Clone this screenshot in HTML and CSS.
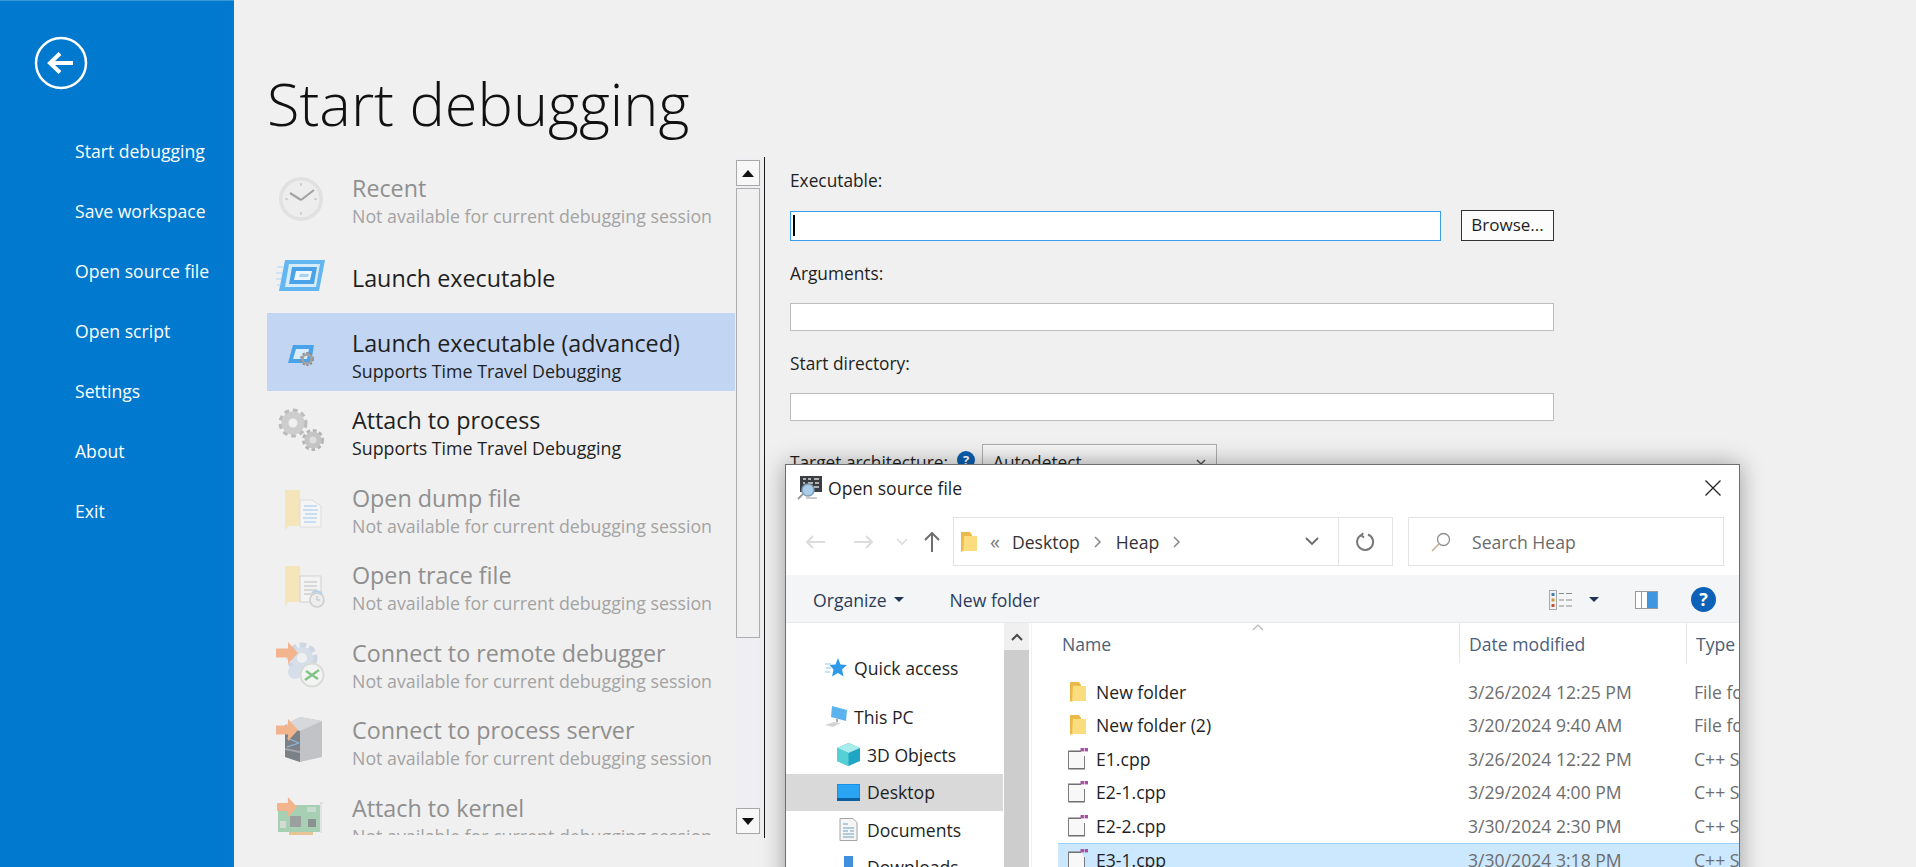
FILE: index.html
```html
<!DOCTYPE html>
<html lang="en">
<head>
    <meta charset="UTF-8">
    <meta name="viewport" content="width=device-width, initial-scale=1.0">
    <title>Start debugging</title>
    <link rel="stylesheet" href="styles.css">
</head>
<body>

<!-- Shared icons -->
<svg class="sprites" aria-hidden="true">
    <symbol id="folder" viewBox="0 0 16 22">
        <path d="M0 1h9l2 3v16H2l-2 1z" fill="#e9b949"/>
        <path d="M3 5h13v15H3l-1 1.5z" fill="#fbdc7f"/>
    </symbol>
    <symbol id="cpp" viewBox="0 0 20 22">
        <path d="M13 3.500H1v17h15V8" fill="#f8f8f8" stroke="#6f6f6f" stroke-width="1.800"/>
        <path d="M1 4h12v3h3v13H1z" fill="#f8f8f8"/>
        <rect x="12.500" y="0" width="3.400" height="3.400" fill="#a4529f"/>
        <rect x="16.600" y="0" width="3.400" height="3.400" fill="#a4529f"/>
    </symbol>
    <symbol id="arrow" viewBox="0 0 22 22">
        <path d="M0 6.500h12V0l10 11-10 11v-6.500H0z" fill="#f2a06c"/>
    </symbol>
</svg>

<aside class="sidebar">
    <svg class="backButton" width="54" height="54" viewBox="0 0 54 54">
        <circle cx="27" cy="27" r="25" fill="none" stroke="#fff" stroke-width="2.500"/>
        <path d="M15 27h24M26 17.500 16 27l10 9.500" fill="none" stroke="#fff" stroke-width="4"/>
    </svg>
    <nav class="sideMenu">
        <a>Start debugging</a>
        <a>Save workspace</a>
        <a>Open source file</a>
        <a>Open script</a>
        <a>Settings</a>
        <a>About</a>
        <a>Exit</a>
    </nav>
</aside>

<main class="main">
    <h1>Start debugging</h1>

    <div class="content">
        <!-- Session list -->
        <div class="sessionList">
            <div class="session disabled">
                <svg class="sessionIcon" viewBox="0 0 50 50">
                    <circle cx="25" cy="25" r="22" fill="#dcdcdc"/>
                    <circle cx="25" cy="25" r="18.500" fill="#ececec"/>
                    <path d="M25 26 14 19M25 26 38 16" stroke="#8a8a8a" stroke-width="2.200" fill="none"/>
                    <path d="M25 9v3M25 38v3M9 25h3M38 25h3" stroke="#bdbdbd" stroke-width="1.500"/>
                </svg>
                <div class="sessionText">
                    <div class="sessionTitle">Recent</div>
                    <div class="sessionSub">Not available for current debugging session</div>
                </div>
            </div>
            <div class="session">
                <svg class="sessionIcon" viewBox="0 0 50 50">
                    <path d="M9 9h40l-6 31H3z" fill="#63b6f0"/>
                    <path d="M13 13h31l-4 23H9z" fill="#d6ecfb"/>
                    <path d="M16 16h25l-3 17H13z" fill="#4aa3e8"/>
                    <path d="M20 20h16l-2 9H18z" fill="#eef7fe"/>
                    <path d="M24 23h9l-1 3h-9z" fill="#a3d2f4"/>
                    <path d="M1 16h7M0 22h6M0 28h5M1 34h3" stroke="#bfe0f8" stroke-width="1.500"/>
                </svg>
                <div class="sessionText">
                    <div class="sessionTitle">Launch executable</div>
                </div>
            </div>
            <div class="session selected">
                <svg class="sessionIcon" viewBox="0 0 50 50">
                    <path d="M17 16h21l-3 18H12z" fill="#4aa3e8"/>
                    <path d="M20 20h13l-2 10H17z" fill="#d9ecfb"/>
                    <circle cx="31" cy="30" r="5.500" fill="none" stroke="#8a8a8a" stroke-width="3" stroke-dasharray="2 1.500"/>
                    <circle cx="31" cy="30" r="4.500" fill="none" stroke="#a2a2a2" stroke-width="2.500"/>
                </svg>
                <div class="sessionText">
                    <div class="sessionTitle">Launch executable (advanced)</div>
                    <div class="sessionSub">Supports Time Travel Debugging</div>
                </div>
            </div>
            <div class="session active">
                <svg class="sessionIcon" viewBox="0 0 50 50">
                    <circle cx="17" cy="17" r="12" fill="none" stroke="#bcbcbc" stroke-width="5" stroke-dasharray="4.500 3.500"/>
                    <circle cx="17" cy="17" r="8" fill="none" stroke="#cdcdcd" stroke-width="7"/>
                    <circle cx="37" cy="34" r="9" fill="none" stroke="#b4b4b4" stroke-width="4" stroke-dasharray="3.500 2.500"/>
                    <circle cx="37" cy="34" r="6" fill="#dedede" stroke="#c4c4c4" stroke-width="5"/>
                </svg>
                <div class="sessionText">
                    <div class="sessionTitle">Attach to process</div>
                    <div class="sessionSub">Supports Time Travel Debugging</div>
                </div>
            </div>
            <div class="session disabled">
                <svg class="sessionIcon" viewBox="0 0 50 50">
                    <path d="M9 6h15l1 36H12l-3 5z" fill="#f7e2a8"/>
                    <path d="M24 16h12l9 6v21H24z" fill="#f7f7f7" stroke="#d6d6d6"/>
                    <path d="M28 22h13M27 26h15M29 30h12M27 34h14M28 38h12" stroke="#a9d0f0" stroke-width="1.500"/>
                </svg>
                <div class="sessionText">
                    <div class="sessionTitle">Open dump file</div>
                    <div class="sessionSub">Not available for current debugging session</div>
                </div>
            </div>
            <div class="session disabled">
                <svg class="sessionIcon" viewBox="0 0 50 50">
                    <path d="M9 5h15l1 36H12l-3 5z" fill="#f7e2a8"/>
                    <path d="M24 15h21v26H24z" fill="#f4f4f4" stroke="#c9c9c9"/>
                    <path d="M28 21h13M28 25h13M28 29h13M28 33h8" stroke="#c4c4c4" stroke-width="1.500"/>
                    <circle cx="41" cy="39" r="7" fill="#ececec" stroke="#c2c2c2" stroke-width="1.500"/>
                    <path d="M41 35v4h3" stroke="#aaa" fill="none"/>
                    <path d="M36 32c3-3 8-2 10 1" stroke="#9cc8ec" stroke-width="2" fill="none"/>
                </svg>
                <div class="sessionText">
                    <div class="sessionTitle">Open trace file</div>
                    <div class="sessionSub">Not available for current debugging session</div>
                </div>
            </div>
            <div class="session disabled">
                <svg class="sessionIcon" viewBox="0 0 50 50">
                    <circle cx="26" cy="19" r="12" fill="none" stroke="#c2cfe0" stroke-width="7" stroke-dasharray="6 3"/>
                    <circle cx="26" cy="19" r="8" fill="none" stroke="#ced9e7" stroke-width="6"/>
                    <circle cx="19" cy="33" r="7" fill="#ced9e7"/>
                    <use href="#arrow" x="0" y="3" width="22" height="22"/>
                    <circle cx="36" cy="36" r="11.500" fill="#f4f4f4" stroke="#cfd6cf" stroke-width="2"/>
                    <path d="M29 41l7-5-6-4M43 31l-7 5 6 4" stroke="#58b55e" stroke-width="2.200" fill="none"/>
                </svg>
                <div class="sessionText">
                    <div class="sessionTitle">Connect to remote debugger</div>
                    <div class="sessionSub">Not available for current debugging session</div>
                </div>
            </div>
            <div class="session disabled">
                <svg class="sessionIcon" viewBox="0 0 50 50">
                    <path d="M9 9 24 1l22 4v36l-22 5-15-5z" fill="#b2b4ba"/>
                    <path d="M9 9l15 6v31L9 41z" fill="#565b64"/>
                    <path d="M9 9l15-8 22 4-22 10z" fill="#cfd0d4"/>
                    <path d="M11 22l12 5M11 31l12-4" stroke="#6fa8dc" stroke-width="1.300"/>
                    <path d="M9 32l15 3v2l-15-3z" fill="#8a8d93"/>
                    <use href="#arrow" x="0" y="3" width="22" height="22"/>
                </svg>
                <div class="sessionText">
                    <div class="sessionTitle">Connect to process server</div>
                    <div class="sessionSub">Not available for current debugging session</div>
                </div>
            </div>
            <div class="session disabled">
                <svg class="sessionIcon" viewBox="0 0 50 50">
                    <rect x="2" y="11" width="42" height="27" fill="#8fc4a0"/>
                    <rect x="13" y="38" width="24" height="3" fill="#e5b676"/>
                    <rect x="14" y="22" width="11" height="11" fill="#7f8683"/>
                    <rect x="32" y="25" width="8" height="8" fill="#6a726e"/>
                    <rect x="31" y="13" width="9" height="5" fill="#b9d3c2"/>
                    <rect x="4" y="27" width="6" height="7" fill="#c9d6cd"/>
                    <path d="M44 9h3M45 9v30" fill="none" stroke="#d4d4d4" stroke-width="1.300"/>
                    <use href="#arrow" x="0" y="3" width="22" height="20"/>
                </svg>
                <div class="sessionText">
                    <div class="sessionTitle">Attach to kernel</div>
                    <div class="sessionSub">Not available for current debugging session</div>
                </div>
            </div>
        </div>

        <!-- Scrollbar of the list -->
        <div class="listScroll">
            <div class="scrollBtn"><span class="triUp"></span></div>
            <div class="scrollThumb"></div>
            <div class="scrollBtn"><span class="triDown"></span></div>
        </div>

        <!-- Executable form -->
        <div class="form">
            <div class="label">Executable:</div>
            <div class="inputRow">
                <div class="textInput focused"><span class="caret"></span></div>
                <div class="browse">Browse...</div>
            </div>
            <div class="label">Arguments:</div>
            <div class="textInput"></div>
            <div class="label">Start directory:</div>
            <div class="textInput"></div>
            <div class="targetRow">
                <span>Target architecture:</span>
                <span class="helpDot">?</span>
                <div class="select">
                    <span>Autodetect</span>
                    <svg width="10" height="7" viewBox="0 0 10 7"><path d="M1 1l4 4 4-4" fill="none" stroke="#555" stroke-width="1.500"/></svg>
                </div>
            </div>
        </div>
    </div>
</main>

<!-- File dialog lying over the page -->
<section class="dialog">
    <header class="dialogTitle">
        <svg width="25" height="24" viewBox="0 0 25 24">
            <rect x="3" y="0" width="22" height="16" fill="#3a3d42"/>
            <path d="M6 3h3M11 3h3M17 3h5M6 7h2M11 7h5M18 7h4M17 11h5" stroke="#d8d8d8" stroke-width="1.500"/>
            <circle cx="11" cy="14" r="6" fill="#a9cde8" stroke="#7f9db4" stroke-width="1.500"/>
            <path d="M6 18 1 23" stroke="#9a9a9a" stroke-width="2"/>
            <path d="M9 22h11" stroke="#bbb" stroke-width="1.500"/>
        </svg>
        <span class="dialogName">Open source file</span>
        <svg class="closeIcon" width="16" height="16" viewBox="0 0 16 16"><path d="M.5.5l15 15M15.500.5l-15 15" stroke="#222" stroke-width="1.300"/></svg>
    </header>

    <div class="pathBar">
        <svg class="navBack" width="20" height="14" viewBox="0 0 20 14"><path d="M20 7H2M8 1 2 7l6 6" fill="none" stroke="#dcdcdc" stroke-width="2"/></svg>
        <svg class="navForward" width="20" height="14" viewBox="0 0 20 14"><path d="M0 7h18M12 1l6 6-6 6" fill="none" stroke="#dcdcdc" stroke-width="2"/></svg>
        <svg class="navDown" width="12" height="7" viewBox="0 0 12 7"><path d="M1 1l5 5 5-5" fill="none" stroke="#dcdcdc" stroke-width="1.600"/></svg>
        <svg class="navUp" width="16" height="20" viewBox="0 0 16 20"><path d="M8 20V2M1 8l7-7 7 7" fill="none" stroke="#6e6e6e" stroke-width="2"/></svg>
        <div class="address">
            <svg class="addrFolder" width="16" height="22"><use href="#folder"/></svg>
            <span class="addrMore">«</span>
            <span>Desktop</span>
            <svg class="addrSep" width="8" height="12" viewBox="0 0 8 12"><path d="M1 1l5 5-5 5" fill="none" stroke="#8c8c8c" stroke-width="1.600"/></svg>
            <span>Heap</span>
            <svg class="addrSep" width="8" height="12" viewBox="0 0 8 12"><path d="M1 1l5 5-5 5" fill="none" stroke="#8c8c8c" stroke-width="1.600"/></svg>
            <svg class="addrChevron" width="14" height="9" viewBox="0 0 14 9"><path d="M1 1l6 6 6-6" fill="none" stroke="#6a6a6a" stroke-width="1.800"/></svg>
            <div class="refresh">
                <svg width="20" height="20" viewBox="0 0 20 20"><path d="M12 2.500a8 8 0 1 1-6.500.3M7 1l-1.500 2.500L8 5.500" fill="none" stroke="#777" stroke-width="2"/></svg>
            </div>
        </div>
        <div class="search">
            <svg width="20" height="20" viewBox="0 0 20 20"><circle cx="12.500" cy="7.500" r="6" fill="none" stroke="#8d8d8d" stroke-width="1.300"/><path d="M8 12 1 19" stroke="#c9a98a" stroke-width="1.500"/></svg>
            <span>Search Heap</span>
        </div>
    </div>

    <div class="toolbar">
        <span class="toolText">Organize</span>
        <span class="toolCaret"></span>
        <span class="toolText newFolder">New folder</span>
        <svg class="viewIcon" width="24" height="20" viewBox="0 0 24 20">
            <rect x=".5" y=".5" width="7" height="19" fill="#f2f2f2" stroke="#a8a8a8"/>
            <rect x="2.500" y="3" width="3" height="3" fill="#3f7fb5"/>
            <rect x="2.500" y="8.500" width="3" height="3" fill="#c89a3b"/>
            <rect x="2.500" y="14" width="3" height="3" fill="#c8502f"/>
            <path d="M10 3.500h5M17 3.500h6M10 10h5M17 10h6M10 16h5M17 16h6" stroke="#8a8a8a" stroke-width="1.200"/>
        </svg>
        <span class="toolCaret viewCaret"></span>
        <svg class="paneIcon" width="23" height="18" viewBox="0 0 23 18">
            <rect x=".5" y=".5" width="22" height="17" fill="#fff" stroke="#9a9a9a"/>
            <rect x="12" y="1" width="10" height="16" fill="#3f97e0"/>
            <path d="M6.500 1v16" stroke="#9a9a9a"/>
        </svg>
        <span class="helpRound">?</span>
    </div>

    <div class="browser">
        <div class="tree">
            <div class="treeItem top">
                <svg width="22" height="20" viewBox="0 0 22 20">
                    <path d="M13 0l2.500 6.500 6.500.5-5 4.500 1.500 7L13 15l-6 3.500 1.500-7-4-4.500 6-.5z" fill="#2f9ae8"/>
                    <path d="M0 6h6M1 10h5M0 14h5" stroke="#8ac6f2" stroke-width="1.200"/>
                </svg>
                <span>Quick access</span>
            </div>
            <div class="treeItem top gapAfter">
                <svg width="22" height="22" viewBox="0 0 22 22">
                    <path d="M7 0l15 4-1 11L6 11z" fill="#5cb3ee"/>
                    <path d="M12 13v3" stroke="#aaa" stroke-width="2"/>
                    <path d="M0 19l9-3 7 1-8 4z" fill="#d4d4d4"/>
                </svg>
                <span>This PC</span>
            </div>
            <div class="treeItem">
                <svg width="23" height="23" viewBox="0 0 23 23">
                    <path d="M11.500 0 23 5v13l-11.500 5L0 18V5z" fill="#1ea6c4"/>
                    <path d="M11.500 0 23 5l-11.500 5L0 5z" fill="#a9ecec"/>
                    <path d="M0 5l11.500 5v13L0 18z" fill="#55d0d4"/>
                </svg>
                <span>3D Objects</span>
            </div>
            <div class="treeItem current">
                <svg width="23" height="17" viewBox="0 0 23 17">
                    <rect width="23" height="17" fill="#1a8fe8"/>
                    <rect x="1" y="1" width="21" height="13" fill="#2aa5f4"/>
                    <rect y="14" width="23" height="3" fill="#0f5f9e"/>
                </svg>
                <span>Desktop</span>
            </div>
            <div class="treeItem">
                <svg width="23" height="23" viewBox="0 0 23 23">
                    <path d="M3 .5h13l4 4v18H3z" fill="#f5f5f5" stroke="#a4a4a4"/>
                    <path d="M6 6h5M6 10h11M6 13h5M13 13h4M6 16h11M6 19h11" stroke="#6f9fc4" stroke-width="1.200"/>
                </svg>
                <span>Documents</span>
            </div>
            <div class="treeItem">
                <svg width="23" height="23" viewBox="0 0 23 23"><path d="M7 0h9v11h6L11.500 22 1 11h6z" fill="#3f8fdc"/></svg>
                <span>Downloads</span>
            </div>
        </div>

        <div class="treeScroll">
            <div class="treeScrollUp">
                <svg width="12" height="8" viewBox="0 0 12 8"><path d="M1 7l5-5 5 5" fill="none" stroke="#4a4a4a" stroke-width="2"/></svg>
            </div>
        </div>

        <div class="files">
            <div class="fileHead">
                <div class="headCell nameCell">Name
                    <svg class="sortMark" width="12" height="7" viewBox="0 0 12 7"><path d="M1 6l5-5 5 5" fill="none" stroke="#b4b4b4" stroke-width="1.200"/></svg>
                </div>
                <div class="headCell">Date modified</div>
                <div class="headCell">Type</div>
            </div>
            <div class="fileRow">
                <div class="fileName"><svg class="fileIcon" width="16" height="22"><use href="#folder"/></svg>New folder</div>
                <div class="fileDate">3/26/2024 12:25 PM</div>
                <div class="fileDate">File folder</div>
            </div>
            <div class="fileRow">
                <div class="fileName"><svg class="fileIcon" width="16" height="22"><use href="#folder"/></svg>New folder (2)</div>
                <div class="fileDate">3/20/2024 9:40 AM</div>
                <div class="fileDate">File folder</div>
            </div>
            <div class="fileRow">
                <div class="fileName"><svg class="fileIcon" width="20" height="22"><use href="#cpp"/></svg>E1.cpp</div>
                <div class="fileDate">3/26/2024 12:22 PM</div>
                <div class="fileDate">C++ Source File</div>
            </div>
            <div class="fileRow">
                <div class="fileName"><svg class="fileIcon" width="20" height="22"><use href="#cpp"/></svg>E2-1.cpp</div>
                <div class="fileDate">3/29/2024 4:00 PM</div>
                <div class="fileDate">C++ Source File</div>
            </div>
            <div class="fileRow">
                <div class="fileName"><svg class="fileIcon" width="20" height="22"><use href="#cpp"/></svg>E2-2.cpp</div>
                <div class="fileDate">3/30/2024 2:30 PM</div>
                <div class="fileDate">C++ Source File</div>
            </div>
            <div class="fileRow picked">
                <div class="fileName"><svg class="fileIcon" width="20" height="22"><use href="#cpp"/></svg>E3-1.cpp</div>
                <div class="fileDate">3/30/2024 3:18 PM</div>
                <div class="fileDate">C++ Source File</div>
            </div>
        </div>
    </div>
</section>

</body>
</html>
```

FILE: styles.css
```css
/* Global Styles */
* {
    box-sizing: border-box;
}

html, body {
    height: 867px;
}

body {
    margin: 0;
    display: flex;
    overflow: hidden;
    position: relative;
    font-family: 'Open Sans', 'Liberation Sans', sans-serif;
    font-size: 17.6px;
    background: #f0f0f0;
    color: #1f1f1f;
}

.sprites {
    display: none;
}

/* Blue backstage menu */
.sidebar {
    width: 234px;
    flex-shrink: 0;
    padding: 35px 0 0 34px;
    background: #0079ce;
    border-top: 1px solid #3a97da;
    color: white;
}

.backButton {
    display: block;
}

.sideMenu {
    display: flex;
    flex-direction: column;
    margin: 31px 0 0 41px;
}

.sideMenu a {
    height: 60px;
    line-height: 60px;
    white-space: nowrap;
}

/* Main Content Area */
.main {
    flex: 1;
    min-width: 0;
}

h1 {
    height: 157px;
    margin: 0;
    padding: 63px 0 0 33px;
    font-size: 59.500px;
    font-weight: 300;
    line-height: 80px;
    color: #111;
}

.content {
    display: flex;
    align-items: flex-start;
    margin-left: 33px;
}

/* Session list */
.sessionList {
    width: 468px;
    height: 677px;
    margin-top: 1px;
    overflow: hidden;
    flex-shrink: 0;
}

.session {
    display: flex;
    align-items: center;
    height: 77.5px;
    white-space: nowrap;
}

.session.selected {
    background: #c2d5f2;
}

.sessionIcon {
    width: 50px;
    height: 50px;
    margin: 4px 26px 0 9px;
    flex-shrink: 0;
}

.disabled .sessionIcon {
    opacity: 0.75;
}

.sessionText {
    margin-top: 8px;
}

.sessionTitle {
    font-size: 23.300px;
    line-height: 30px;
}

.sessionSub {
    font-size: 17.800px;
    line-height: 26px;
}

.disabled .sessionTitle {
    color: #8f8f8f;
}

.disabled .sessionSub {
    color: #a3a3a3;
}

/* List scrollbar */
.listScroll {
    display: flex;
    flex-direction: column;
    flex-shrink: 0;
    width: 27px;
    height: 677px;
    margin-top: 1px;
    padding: 2px 2px 1px 1px;
    background: #eeeef3;
}

.scrollBtn {
    height: 26px;
    display: flex;
    align-items: center;
    justify-content: center;
    background: #f7f7f7;
    border: 1px solid #a8a8a8;
}

.triUp, .triDown {
    width: 0;
    height: 0;
    border-left: 6px solid transparent;
    border-right: 6px solid transparent;
}

.triUp {
    border-bottom: 7px solid #111;
}

.triDown {
    border-top: 7px solid #111;
}

.scrollThumb {
    height: 450px;
    margin-top: 2px;
    margin-bottom: auto;
    background: #f0f0f0;
    border: 1px solid #adadad;
}

/* Executable form */
.form {
    width: 790px;
    height: 681px;
    padding: 12px 0 0 25px;
    border-left: 1px solid #1a1a1a;
    margin-left: 2px;
}

.label {
    height: 24px;
    line-height: 24px;
    font-size: 17.300px;
    margin-bottom: 17px;
}

.textInput {
    width: 764px;
    height: 28px;
    margin-bottom: 21px;
    background: white;
    border: 1px solid #bdbdbd;
}

.inputRow {
    display: flex;
    gap: 20px;
    margin-bottom: 21px;
}

.inputRow .textInput {
    width: 651px;
    height: 30px;
    margin: 1px 0 0 0;
    padding: 3px 0 0 2px;
    border-color: #3d9be9;
}

.caret {
    display: block;
    width: 2px;
    height: 21px;
    background: black;
}

.browse {
    width: 93px;
    height: 31px;
    line-height: 28px;
    text-align: center;
    font-size: 17px;
    background: #fcfcfc;
    border: 1px solid #333;
}

.targetRow {
    display: flex;
    align-items: flex-start;
    margin-top: 23px;
    font-size: 17.300px;
}

.targetRow > span:first-child {
    margin-top: 7px;
}

.helpDot {
    width: 18px;
    height: 18px;
    margin: 7px 7px 0 9px;
    border-radius: 50%;
    background: #0b5fb0;
    color: white;
    font-size: 13px;
    font-weight: 700;
    line-height: 18px;
    text-align: center;
}

.select {
    display: flex;
    align-items: center;
    justify-content: space-between;
    width: 235px;
    height: 36px;
    padding: 0 10px;
    background: linear-gradient(#f6f6f6, #e6e6e6);
    border: 1px solid #acacac;
}

/* File dialog */
.dialog {
    position: absolute;
    left: 785px;
    top: 464px;
    width: 955px;
    height: 440px;
    overflow: hidden;
    background: white;
    border: 1px solid #6e6e6e;
    box-shadow: 0 0 22px rgba(0, 0, 0, 0.35);
}

.dialogTitle {
    display: flex;
    align-items: center;
    height: 46px;
    padding: 0 18px 0 11px;
}

.dialogName {
    margin-left: 6px;
}

.closeIcon {
    margin-left: auto;
}

.pathBar {
    display: flex;
    align-items: center;
    height: 64px;
    padding: 6px 15px 9px 19px;
}

.navBack {
    margin-right: 29px;
}

.navForward {
    margin-right: 22px;
}

.navDown {
    margin-right: 16px;
}

.navUp {
    margin-right: 13px;
}

.address, .search {
    display: flex;
    align-items: center;
    height: 49px;
    background: white;
    border: 1px solid #e3e3e3;
}

.address {
    width: 440px;
    padding-left: 7px;
    color: #333;
}

.addrMore {
    margin: 0 12px 0 13px;
    font-size: 20px;
    color: #777;
}

.addrSep {
    margin: 0 14px;
}

.addrChevron {
    margin-left: auto;
    margin-right: 19px;
}

.refresh {
    display: flex;
    align-items: center;
    justify-content: center;
    width: 54px;
    height: 47px;
    border-left: 1px solid #e3e3e3;
}

.search {
    width: 316px;
    margin-left: 15px;
    padding-left: 22px;
    gap: 21px;
    color: #6b6b6b;
}

.toolbar {
    display: flex;
    align-items: center;
    height: 48px;
    padding: 2px 0 0 27px;
    background: #f3f5f7;
    border-bottom: 1px solid #e8eaec;
    color: #2b3d5a;
}

.toolCaret {
    width: 0;
    height: 0;
    margin-left: 7px;
    border-left: 5px solid transparent;
    border-right: 5px solid transparent;
    border-top: 5px solid #1e3554;
}

.newFolder {
    margin-left: 46px;
}

.viewIcon {
    margin-left: auto;
}

.viewCaret {
    margin-left: 16px;
}

.paneIcon {
    margin-left: 36px;
}

.helpRound {
    width: 25px;
    height: 25px;
    margin: 0 23px 0 33px;
    border-radius: 50%;
    background: #0b62b8;
    color: white;
    font-size: 18px;
    font-weight: 700;
    line-height: 25px;
    text-align: center;
}

.browser {
    display: flex;
    height: 300px;
}

/* Navigation tree */
.tree {
    width: 217px;
    padding-top: 26px;
    flex-shrink: 0;
}

.treeItem {
    display: flex;
    align-items: center;
    gap: 7px;
    height: 37.5px;
    padding-left: 51px;
    white-space: nowrap;
}

.treeItem svg {
    flex-shrink: 0;
}

.treeItem.top {
    padding-left: 39px;
}

.treeItem.gapAfter {
    margin-top: 12px;
}

.treeItem.current {
    background: #d9d9d9;
}

.treeScroll {
    width: 25px;
    margin-left: 1px;
    background: #cdcdcd;
    flex-shrink: 0;
}

.treeScrollUp {
    display: flex;
    align-items: center;
    justify-content: center;
    height: 27px;
    background: #f0f0f0;
}

/* File list */
.files {
    flex: 1;
    min-width: 0;
    margin-left: 2px;
    border-left: 1px solid #f2f2f2;
}

.fileHead {
    display: grid;
    grid-template-columns: 427px 227px 1fr;
    height: 40px;
    margin-bottom: 12px;
}

.headCell {
    position: relative;
    padding: 9px 0 0 9px;
    border-left: 1px solid #e5e5e5;
    color: #4c607a;
    white-space: nowrap;
}

.nameCell {
    padding-left: 30px;
    border-left: none;
}

.sortMark {
    position: absolute;
    left: 220px;
    top: 1px;
}

.fileRow {
    display: grid;
    grid-template-columns: 402px 226px 1fr;
    align-items: center;
    height: 33.5px;
    margin-left: 26px;
    white-space: nowrap;
}

.fileRow.picked {
    background: #cce8ff;
    border-top: 1px solid #99d1ff;
}

.fileName {
    display: flex;
    align-items: center;
    padding-left: 10px;
}

.fileIcon {
    width: 20px;
    margin-right: 8px;
}

.fileDate {
    padding-left: 8px;
    color: #6d6d6d;
}
```
